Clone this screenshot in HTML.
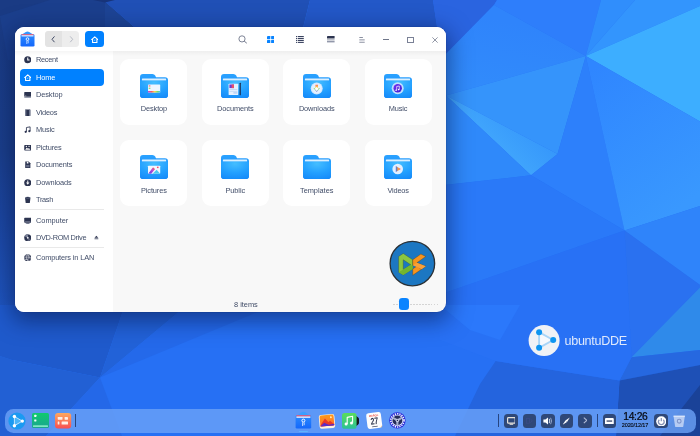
<!DOCTYPE html>
<html lang="en">
<head>
<meta charset="utf-8">
<title>ubuntuDDE Desktop - File Manager</title>
<style>
html,body{margin:0;padding:0;}
body{width:700px;height:436px;overflow:hidden;position:relative;background:#2670f4;font-family:"Liberation Sans",sans-serif;}
#bg{position:absolute;left:0;top:0;width:700px;height:436px;display:block;}
/* ---------- window ---------- */
#win{position:absolute;left:15px;top:27px;width:431.3px;height:285px;border-radius:9px;background:#f8f8f8;
 box-shadow:0 6px 22px 3px rgba(3,15,60,0.50),0 0 0 0.5px rgba(10,30,90,0.18);overflow:hidden;will-change:transform;}
#tbar{position:absolute;left:0;top:0;width:100%;height:24px;background:#fff;}
#side{position:absolute;left:0;top:24px;width:97.5px;height:261px;background:#fff;}
.abs{position:absolute;display:block;}
.navgrp{position:absolute;left:30px;top:3.6px;width:34px;height:16.5px;border-radius:3.5px;background:#ededed;overflow:hidden;}
.navgrp .bk{position:absolute;left:0;top:0;width:17px;height:16.5px;background:#e3e3e3;}
.homebtn{position:absolute;left:70px;top:3.6px;width:19.2px;height:16.5px;border-radius:3.5px;background:#0081ff;}
.row{position:absolute;left:4.9px;width:84px;height:16.5px;border-radius:4px;color:#414d68;font-size:7.4px;line-height:16.5px;white-space:nowrap;}
.row span{position:absolute;left:16.1px;top:0.7px;}
.row svg{position:absolute;left:4.0px;top:4.7px;width:7.5px;height:7.5px;}
.row.sel{background:#0081ff;color:#fff;}
.sep{position:absolute;left:4.6px;width:84.4px;height:0.8px;background:#e9e9e9;}
.card{position:absolute;width:67px;height:66px;border-radius:9px;background:#fff;}
.card .lbl{position:absolute;left:0;width:67px;top:45.9px;text-align:center;font-size:7.4px;line-height:10px;color:#414d68;}
.card svg{position:absolute;left:19.5px;top:15px;width:28px;height:24.2px;}
#status{position:absolute;left:205.9px;top:273.2px;width:50px;text-align:center;font-size:7.4px;line-height:10px;color:#414d68;}
/* ---------- dock ---------- */
#dock{position:absolute;left:4.8px;top:409px;width:690.8px;height:23.5px;border-radius:8.5px;background:rgba(108,163,248,0.80);}
.tray{position:absolute;top:414px;width:13.6px;height:13.6px;border-radius:3.5px;background:#2f4878;}
.dsep{position:absolute;top:414.3px;width:1px;height:13.2px;background:#27457f;}
#clock{position:absolute;left:615.4px;top:412.2px;width:40px;text-align:center;color:#05080f;font-size:10.3px;line-height:10px;letter-spacing:-0.34px;-webkit-text-stroke:0.22px #05080f;}
#date{position:absolute;left:615px;top:421.9px;width:40px;text-align:center;color:#05080f;font-size:5.5px;line-height:6px;letter-spacing:-0.1px;-webkit-text-stroke:0.12px #05080f;}
#brand{position:absolute;left:564.5px;top:332.6px;font-size:12.6px;line-height:16px;color:#dfe9fc;white-space:nowrap;letter-spacing:-0.3px;}
</style>
</head>
<body>
<div id="root" style="position:absolute;left:0;top:0;width:700px;height:436px;will-change:transform">
<!-- ================= WALLPAPER ================= -->
<svg id="bg" viewBox="0 0 700 436" preserveAspectRatio="none">
<rect width="700" height="436" fill="#2670f4"/>
<g id="polys">
<defs>
<linearGradient id="gAD" gradientUnits="userSpaceOnUse" x1="590" y1="70" x2="690" y2="200"><stop offset="0" stop-color="#2f86ff"/><stop offset="1" stop-color="#3998fe"/></linearGradient>
<linearGradient id="gB" gradientUnits="userSpaceOnUse" x1="490" y1="140" x2="520" y2="110"><stop offset="0" stop-color="#40a5fc"/><stop offset="1" stop-color="#3596fb"/></linearGradient>
<linearGradient id="gT" gradientUnits="userSpaceOnUse" x1="500" y1="20" x2="485" y2="90"><stop offset="0" stop-color="#2f84fb"/><stop offset="1" stop-color="#318bfb"/></linearGradient>
<linearGradient id="gL" gradientUnits="userSpaceOnUse" x1="0" y1="0" x2="0" y2="360"><stop offset="0" stop-color="#1a3b84"/><stop offset=".42" stop-color="#1b3f8c"/><stop offset=".6" stop-color="#1c46a0"/><stop offset=".75" stop-color="#1e4fb2"/><stop offset=".9" stop-color="#1f58c6"/><stop offset="1" stop-color="#1f5acc"/></linearGradient>
</defs>
<polygon points="0.0,0.0 103.0,0.0 142.0,34.0 142.0,300.0 0.0,300.0" fill="#1b3f8d" />
<polygon points="105.0,1.6 142.0,34.0 105.0,34.0" fill="#1d4495" />
<polygon points="0.0,0.0 50.0,0.0 0.0,16.0" fill="#1a3b84" />
<polygon points="0.0,16.0 0.0,356.0 12.5,360.0 30.0,345.0 30.0,60.0 8.0,60.0" fill="url(#gL)" />
<polygon points="103.0,0.0 310.0,0.0 300.0,40.0 149.0,40.0" fill="#2050b6" />
<polygon points="93.0,0.0 115.0,0.0 105.0,2.4" fill="#17347a" />
<polygon points="310.0,0.0 433.0,0.0 439.0,40.0 300.0,40.0" fill="#2358c8" />
<polygon points="433.0,0.0 497.0,0.0 494.0,5.0 440.0,60.0 439.0,40.0" fill="#2a64e0" />
<polygon points="497.0,0.0 601.0,0.0 585.8,56.0 494.0,5.0" fill="#2e7efb" />
<polygon points="601.0,0.0 635.0,0.0 585.8,56.0" fill="#308efc" />
<polygon points="635.0,0.0 700.0,0.0 700.0,6.0 585.8,56.0" fill="#3395fd" />
<polygon points="700.0,6.0 700.0,121.5 585.8,56.0" fill="#3daeff" />
<polygon points="494.0,5.0 585.8,56.0 446.0,95.5 440.0,97.0 440.0,60.0" fill="url(#gT)" />
<polygon points="446.0,95.5 585.8,56.0 557.5,154.0" fill="#3594fb" />
<polygon points="446.0,95.5 557.5,154.0 531.0,175.3" fill="url(#gB)" />
<polygon points="446.0,95.5 531.0,175.3 440.0,185.5 440.0,97.0" fill="#2f89fa" />
<polygon points="585.8,56.0 624.5,230.5 531.0,175.3 557.5,154.0" fill="#2d80fb" />
<polygon points="585.8,56.0 700.0,121.5 700.0,206.0 624.5,230.5" fill="url(#gAD)" />
<polygon points="624.5,230.5 700.0,206.0 700.0,285.0" fill="#2f84fa" />
<polygon points="440.0,185.5 531.0,175.3 624.5,230.5 440.0,294.5" fill="#2a79f8" />
<polygon points="624.5,230.5 700.0,285.0 700.0,287.5 631.6,357.3" fill="#2a71f0" />
<polygon points="631.6,357.3 700.0,287.5 700.0,350.0" fill="#2f8aea" />
<polygon points="631.6,357.3 700.0,350.0 700.0,365.0 619.5,380.4" fill="#2668e0" />
<polygon points="619.5,380.4 700.0,365.0 700.0,436.0 616.0,436.0" fill="#1e50b6" />
<polygon points="660.0,436.0 700.0,385.0 700.0,436.0" fill="#1a4298" />
<polygon points="495.7,361.0 619.5,380.4 616.0,436.0 455.0,436.0 480.0,384.0" fill="#2464de" />
<polygon points="440.0,294.5 624.5,230.5 631.6,357.3 619.5,380.4 495.7,361.0 440.0,340.0" fill="#2871f5" />
<polygon points="100.0,377.5 125.0,305.0 0.0,305.0 0.0,356.0 12.5,360.0" fill="#1f5acc" />
<polygon points="100.0,377.5 125.0,305.0 187.0,305.0" fill="#2262d8" />
<polygon points="100.0,377.5 187.0,305.0 275.0,305.0" fill="#2469ea" />
<polygon points="100.0,377.5 12.5,360.0 0.0,356.0 0.0,436.0 46.0,436.0" fill="#2260d4" />
<polygon points="100.0,377.5 46.0,436.0 122.0,436.0" fill="#2468e8" />
<polygon points="440.0,305.0 520.0,305.0 500.0,340.0 470.0,330.0" fill="#2b78fb" />
</g>
</svg>

<!-- ================= BRAND ================= -->
<svg class="abs" style="left:528px;top:324.5px;width:32px;height:32px" viewBox="0 0 32 32">
 <circle cx="16.1" cy="15.6" r="15.5" fill="#f0f2f6"/>
 <path d="M11.1 7.2 L25.2 15 L11.1 22.8 Z" fill="#f6f9fd" stroke="#a9d5f7" stroke-width="1.9" stroke-linejoin="round"/>
 <circle cx="11.1" cy="7.2" r="3" fill="#0f95f0"/>
 <circle cx="25.2" cy="15" r="3" fill="#0f95f0"/>
 <circle cx="11.1" cy="22.8" r="3" fill="#0f95f0"/>
</svg>
<div id="brand">ubuntuDDE</div>

<!-- ================= FILE MANAGER WINDOW ================= -->
<div id="win">
 <div id="tbar">
  <svg class="abs" style="left:5.4px;top:3.6px;width:15px;height:16px" viewBox="0 0 30 32">
   <defs><linearGradient id="fmg" x1="0" y1="0" x2="0" y2="1"><stop offset="0" stop-color="#2a8bff"/><stop offset="1" stop-color="#1467fb"/></linearGradient></defs>
   <path d="M1.4 8.4 L11.6 2.2 Q15 0.2 18.4 2.2 L28.6 8.4 Z" fill="#3398ff"/>
   <rect x="1" y="6.4" width="28" height="24.6" rx="2.6" fill="url(#fmg)"/>
   <rect x="3" y="6.4" width="24" height="2.2" fill="#ff5a6a"/>
   <rect x="3" y="8.6" width="24" height="2.2" fill="#f4f7ff"/>
   <circle cx="15" cy="16.2" r="2.7" fill="none" stroke="#fff" stroke-width="1.7"/>
   <path d="M13.6 19.4 V26 M16.4 19.4 V24.6" stroke="#fff" stroke-width="1.3" fill="none"/>
  </svg>
  <div class="navgrp"><div class="bk"></div>
   <svg class="abs" style="left:0;top:0;width:34px;height:16px" viewBox="0 0 34 16">
    <path d="M9.5 5.4 L7 8.3 L9.5 11.2" fill="none" stroke="#3a4360" stroke-width="0.95"/>
    <path d="M25.2 5.4 L27.7 8.3 L25.2 11.2" fill="none" stroke="#b3b7c2" stroke-width="0.95"/>
   </svg>
  </div>
  <div class="homebtn"><svg class="abs" style="left:5.85px;top:5.0px;width:7.5px;height:7.5px" viewBox="0 0 16 16"><path d="M8 1.8 L14.6 7.6 H12.6 V14.2 H3.4 V7.6 H1.4 Z" fill="none" stroke="#fff" stroke-width="2.3" stroke-linejoin="round"/><path d="M6.2 8.2 H9.8 L8 10.6 Z" fill="#fff" opacity=".75"/></svg></div>
  <!-- search -->
  <svg class="abs" style="left:222.6px;top:8px;width:9.4px;height:8.6px" viewBox="0 0 9.4 8.6"><circle cx="4" cy="3.9" r="3.1" fill="none" stroke="#6f768a" stroke-width="0.9"/><path d="M6.2 6.1 L8.8 8.2" stroke="#6f768a" stroke-width="1" fill="none"/></svg>
  <!-- grid -->
  <svg class="abs" style="left:252px;top:8.8px;width:7.4px;height:7.2px" viewBox="0 0 7.4 7.2"><g fill="#0a84ff"><rect x="0" y="0" width="3.3" height="3.2" rx=".5"/><rect x="4.1" y="0" width="3.3" height="3.2" rx=".5"/><rect x="0" y="4" width="3.3" height="3.2" rx=".5"/><rect x="4.1" y="4" width="3.3" height="3.2" rx=".5"/></g></svg>
  <!-- list -->
  <svg class="abs" style="left:281px;top:9px;width:7.8px;height:7px" viewBox="0 0 7.8 7"><g fill="#3a4360"><rect x="0" y="0" width="1.1" height="1.1"/><rect x="1.8" y="0" width="6" height="1.1"/><rect x="0" y="1.95" width="1.1" height="1.1"/><rect x="1.8" y="1.95" width="6" height="1.1"/><rect x="0" y="3.9" width="1.1" height="1.1"/><rect x="1.8" y="3.9" width="6" height="1.1"/><rect x="0" y="5.85" width="1.1" height="1.1"/><rect x="1.8" y="5.85" width="6" height="1.1"/></g></svg>
  <!-- detail -->
  <svg class="abs" style="left:312.4px;top:8.5px;width:7.6px;height:7.6px" viewBox="0 0 7.6 7.6"><rect x="0" y="0" width="7.6" height="2.6" rx=".4" fill="#2c3450"/><g fill="#9298aa"><rect x="0" y="3.4" width="7.6" height="1"/><rect x="0" y="5.0" width="7.6" height="1"/><rect x="0" y="6.6" width="7.6" height="1"/></g></svg>
  <!-- menu -->
  <svg class="abs" style="left:343.6px;top:9.9px;width:6px;height:6px" viewBox="0 0 6 6"><g fill="#6f768a"><rect x="0.3" y="0.2" width="3.6" height=".8"/><rect x="0.3" y="2.5" width="5.4" height=".8"/><rect x="0.3" y="4.8" width="5.4" height=".8"/></g></svg>
  <!-- minimize -->
  <div class="abs" style="left:368.2px;top:12px;width:6.2px;height:0.9px;background:#6f768a"></div>
  <!-- maximize -->
  <div class="abs" style="left:392.4px;top:10.2px;width:5.1px;height:3.6px;border:0.8px solid #7a8196"></div>
  <!-- close -->
  <svg class="abs" style="left:416.7px;top:9.6px;width:6px;height:6px" viewBox="0 0 6.4 6.4"><path d="M0.4 0.4 L6 6 M6 0.4 L0.4 6" stroke="#6f768a" stroke-width=".8" fill="none"/></svg>
 </div>
 <div id="side">
<div class="row" style="top:0.80px"><svg viewBox="0 0 16 16"><circle cx="8" cy="8" r="7.6" fill="#2c3450"/><path d="M8 3.4V8.6H11.8" fill="none" stroke="#fff" stroke-width="2.2"/></svg><span style="letter-spacing:-0.284px">Recent</span></div>
<div class="row sel" style="top:18.30px"><svg viewBox="0 0 16 16"><path d="M8 1.8 L14.6 7.6 H12.6 V14.2 H3.4 V7.6 H1.4 Z" fill="none" stroke="#fff" stroke-width="2.3" stroke-linejoin="round"/><path d="M6.2 8.2 H9.8 L8 10.6 Z" fill="#fff" opacity=".75"/></svg><span style="letter-spacing:-0.106px">Home</span></div>
<div class="row" style="top:35.80px"><svg viewBox="0 0 16 16"><rect x="0.5" y="2" width="15" height="10" rx="1" fill="#2c3450"/><rect x="0.5" y="12.6" width="15" height="1.8" rx="0.6" fill="#7a8198"/><rect x="2" y="10" width="3" height="1.2" fill="#fff" opacity=".8"/></svg><span style="letter-spacing:-0.088px">Desktop</span></div>
<div class="row" style="top:53.30px"><svg viewBox="0 0 16 16"><rect x="2.5" y="1" width="11" height="14" rx="1.2" fill="#2c3450"/><rect x="2.5" y="1" width="2.4" height="14" fill="#7f869c"/><rect x="11.1" y="1" width="2.4" height="14" fill="#7f869c"/></svg><span style="letter-spacing:-0.214px">Videos</span></div>
<div class="row" style="top:70.80px"><svg viewBox="0 0 16 16"><path d="M5.2 12.2V3.2L13 1.8V10.8" fill="none" stroke="#2c3450" stroke-width="1.8" stroke-linejoin="round"/><circle cx="3.6" cy="12.4" r="2.4" fill="#2c3450"/><circle cx="11.4" cy="11" r="2.4" fill="#2c3450"/></svg><span style="letter-spacing:-0.141px">Music</span></div>
<div class="row" style="top:88.30px"><svg viewBox="0 0 16 16"><rect x="0.5" y="2" width="15" height="12" rx="1.6" fill="#2c3450"/><path d="M2.5 12 L6 7.4 L8.6 10.2 L10.6 8.4 L13.5 12 Z" fill="#fff"/><circle cx="5" cy="5.2" r="1.3" fill="#fff"/><rect x="9" y="4" width="3.6" height="1.6" fill="#fff"/></svg><span style="letter-spacing:-0.129px">Pictures</span></div>
<div class="row" style="top:105.80px"><svg viewBox="0 0 16 16"><path d="M2.6 1 H10 L13.6 4.6 V15 H2.6 Z" fill="#2c3450"/><path d="M6 1.8 H9.4 V5.4 H6 Z" fill="#fff"/><rect x="4.6" y="8.4" width="7" height="5" fill="#666e88"/></svg><span style="letter-spacing:-0.111px">Documents</span></div>
<div class="row" style="top:123.30px"><svg viewBox="0 0 16 16"><circle cx="8" cy="8" r="7.6" fill="#2c3450"/><path d="M8 3.2 V8.4" stroke="#fff" stroke-width="2" fill="none"/><path d="M4.4 7.6 L8 12.2 L11.6 7.6 Z" fill="#fff"/></svg><span style="letter-spacing:-0.109px">Downloads</span></div>
<div class="row" style="top:140.80px"><svg viewBox="0 0 16 16"><path d="M2.2 3.6 H13.8 L12.4 15 H3.6 Z" fill="#2c3450"/><ellipse cx="8" cy="3.4" rx="5.9" ry="1.9" fill="#6a728c"/><ellipse cx="8" cy="3.2" rx="4.4" ry="1" fill="#2c3450"/></svg><span style="letter-spacing:-0.331px">Trash</span></div>
<div class="row" style="top:161.00px"><svg viewBox="0 0 16 16"><rect x="0.5" y="1.6" width="15" height="10.4" rx="1.4" fill="#2c3450"/><rect x="2.4" y="9.4" width="11.2" height="1.2" fill="#8a90a6"/><rect x="5" y="12.6" width="6" height="1.8" fill="#2c3450"/><rect x="3.4" y="13.6" width="9.2" height="1.2" fill="#8a90a6"/></svg><span style="letter-spacing:-0.022px">Computer</span></div>
<div class="row" style="top:178.20px"><svg viewBox="0 0 16 16"><circle cx="8" cy="8" r="7.6" fill="#2c3450"/><path d="M8 8 L1.2 5 A7.4 7.4 0 0 1 8.6 0.6 Z" fill="#7d849a"/><path d="M8 8 L14.8 11 A7.4 7.4 0 0 1 7.4 15.4 Z" fill="#596078"/><circle cx="8" cy="8" r="2" fill="#e8eaf0"/></svg><span style="letter-spacing:-0.342px">DVD-ROM Drive</span><svg style="left:74.5px;top:6.0px;width:4.8px;height:4.8px" viewBox="0 0 12 12"><path d="M6 1.6 L10.8 7 H1.2 Z" fill="#2c3450"/><rect x="1.2" y="8.6" width="9.6" height="1.9" fill="#2c3450"/></svg></div>
<div class="row" style="top:198.30px"><svg viewBox="0 0 16 16"><circle cx="8" cy="8" r="7.6" fill="#2c3450"/><path d="M8 .8 C4.4 4 4.4 12 8 15.2 M8 .8 C11.6 4 11.6 12 8 15.2 M.8 8 H15.2 M2 4.2 H14 M2 11.8 H14" fill="none" stroke="#fff" stroke-width="1.1" opacity=".9"/><rect x="8.6" y="8.8" width="6" height="4.6" rx=".6" fill="#2c3450" stroke="#fff" stroke-width=".7"/></svg><span style="letter-spacing:-0.140px">Computers in LAN</span></div>
<div class="sep" style="top:158.2px"></div>
<div class="sep" style="top:196.0px"></div>
 </div>
<svg width="0" height="0" style="position:absolute"><defs>
 <linearGradient id="fb" x1="0" y1="0" x2="0" y2="1"><stop offset="0" stop-color="#2aa2ff"/><stop offset="1" stop-color="#1a86fb"/></linearGradient>
 <radialGradient id="ff" cx="0.5" cy="0.12" r="0.95"><stop offset="0" stop-color="#45beff"/><stop offset="0.55" stop-color="#23a0ff"/><stop offset="1" stop-color="#158af9"/></radialGradient>
 <linearGradient id="rb" x1="0" y1="0" x2="1" y2="0"><stop offset="0" stop-color="#b34be8"/><stop offset=".3" stop-color="#ff5a5a"/><stop offset=".55" stop-color="#ffd84a"/><stop offset=".8" stop-color="#6ade6a"/><stop offset="1" stop-color="#49c0ff"/></linearGradient>
 <linearGradient id="rbv" x1="0" y1="0" x2="0" y2="1"><stop offset="0" stop-color="#ff6a5a"/><stop offset=".35" stop-color="#ffd24a"/><stop offset=".6" stop-color="#7ade7a"/><stop offset="1" stop-color="#8a6af0"/></linearGradient>
 <linearGradient id="pur" x1="0" y1="0" x2="1" y2="1"><stop offset="0" stop-color="#7a30f0"/><stop offset="1" stop-color="#3a1ed0"/></linearGradient>
 <linearGradient id="mnt" x1="0" y1="1" x2="1" y2="0"><stop offset="0" stop-color="#5a3ae8"/><stop offset=".6" stop-color="#c04ad0"/><stop offset="1" stop-color="#ff6a3a"/></linearGradient>
 <linearGradient id="ply" x1="0" y1="0" x2="1" y2="0"><stop offset="0" stop-color="#3a6af0"/><stop offset=".5" stop-color="#ffa63a"/><stop offset="1" stop-color="#ff3a6a"/></linearGradient>
</defs></svg>
<div class="card" style="left:105.4px;top:31.5px"><svg viewBox="0 0 28 24"><path d="M0 3 Q0 0 3 0 H12.4 Q14.4 0 15.2 1.5 L16 3.2 H25 Q28 3.2 28 6.2 V21 Q28 24 25 24 H3 Q0 24 0 21 Z" fill="url(#fb)"/><rect x="1.9" y="4.5" width="24.2" height="2.2" rx=".4" fill="#e9f6ff" opacity=".92"/><path d="M0 6.5 H28 V21 Q28 24 25 24 H3 Q0 24 0 21 Z" fill="url(#ff)"/><rect x="8" y="10.4" width="12.2" height="8" rx=".6" fill="#eef6ff"/><rect x="8" y="16.9" width="12.2" height="1.5" fill="url(#rb)"/><rect x="8.7" y="11.3" width="1.7" height="1.1" fill="#ff5a6a"/><rect x="8.7" y="13.6" width="1.7" height="1.1" fill="#7ad85a"/></svg><div class="lbl" style="letter-spacing:-0.088px">Desktop</div></div>
<div class="card" style="left:186.8px;top:31.5px"><svg viewBox="0 0 28 24"><path d="M0 3 Q0 0 3 0 H12.4 Q14.4 0 15.2 1.5 L16 3.2 H25 Q28 3.2 28 6.2 V21 Q28 24 25 24 H3 Q0 24 0 21 Z" fill="url(#fb)"/><rect x="1.9" y="4.5" width="24.2" height="2.2" rx=".4" fill="#e9f6ff" opacity=".92"/><path d="M0 6.5 H28 V21 Q28 24 25 24 H3 Q0 24 0 21 Z" fill="url(#ff)"/><rect x="7.6" y="9.6" width="9.6" height="11.2" rx=".5" fill="#e6f1ff"/><rect x="8.4" y="10.4" width="4.6" height="3.6" fill="#6a3ad8"/><rect x="10.6" y="10.4" width="2.4" height="3.6" fill="#e8506a"/><rect x="8.4" y="15.2" width="8" height=".7" fill="#b8d2f4"/><rect x="8.4" y="16.8" width="8" height=".7" fill="#b8d2f4"/><rect x="12.4" y="18.4" width="4" height=".9" fill="#9abcf0"/><rect x="18.6" y="8.6" width="1.2" height="12.6" rx=".5" fill="#1d2a4a"/></svg><div class="lbl" style="letter-spacing:-0.111px">Documents</div></div>
<div class="card" style="left:268.2px;top:31.5px"><svg viewBox="0 0 28 24"><path d="M0 3 Q0 0 3 0 H12.4 Q14.4 0 15.2 1.5 L16 3.2 H25 Q28 3.2 28 6.2 V21 Q28 24 25 24 H3 Q0 24 0 21 Z" fill="url(#fb)"/><rect x="1.9" y="4.5" width="24.2" height="2.2" rx=".4" fill="#e9f6ff" opacity=".92"/><path d="M0 6.5 H28 V21 Q28 24 25 24 H3 Q0 24 0 21 Z" fill="url(#ff)"/><circle cx="13.7" cy="14.3" r="6" fill="#cfe6ff"/><circle cx="13.7" cy="14.3" r="5" fill="#e4f1ff"/><path d="M12.4 10.6 H15 V13.8 H17 L13.7 18 L10.4 13.8 H12.4 Z" fill="url(#rbv)"/><path d="M11.6 14.6 L13.7 13 L15.8 14.6 L13.7 17 Z" fill="#fff"/></svg><div class="lbl" style="letter-spacing:-0.109px">Downloads</div></div>
<div class="card" style="left:349.6px;top:31.5px"><svg viewBox="0 0 28 24"><path d="M0 3 Q0 0 3 0 H12.4 Q14.4 0 15.2 1.5 L16 3.2 H25 Q28 3.2 28 6.2 V21 Q28 24 25 24 H3 Q0 24 0 21 Z" fill="url(#fb)"/><rect x="1.9" y="4.5" width="24.2" height="2.2" rx=".4" fill="#e9f6ff" opacity=".92"/><path d="M0 6.5 H28 V21 Q28 24 25 24 H3 Q0 24 0 21 Z" fill="url(#ff)"/><circle cx="13.7" cy="14.1" r="6" fill="#bfe0ff"/><circle cx="13.7" cy="14.1" r="4.2" fill="url(#pur)"/><path d="M12.7 16 V12.4 L15.3 11.9 V15.4" stroke="#fff" stroke-width=".7" fill="none"/><circle cx="12.1" cy="16.1" r=".8" fill="#fff"/><circle cx="14.7" cy="15.5" r=".8" fill="#fff"/></svg><div class="lbl" style="letter-spacing:-0.141px">Music</div></div>
<div class="card" style="left:105.4px;top:113.2px"><svg viewBox="0 0 28 24"><path d="M0 3 Q0 0 3 0 H12.4 Q14.4 0 15.2 1.5 L16 3.2 H25 Q28 3.2 28 6.2 V21 Q28 24 25 24 H3 Q0 24 0 21 Z" fill="url(#fb)"/><rect x="1.9" y="4.5" width="24.2" height="2.2" rx=".4" fill="#e9f6ff" opacity=".92"/><path d="M0 6.5 H28 V21 Q28 24 25 24 H3 Q0 24 0 21 Z" fill="url(#ff)"/><rect x="8" y="10.6" width="12.2" height="8" rx=".6" fill="#f2f7ff"/><path d="M8.4 18.4 L12.6 12.6 Q13.4 12 14 12.8 L15 14.2 L11.2 18.6 Z" fill="url(#mnt)"/><path d="M12.6 18.6 L16.6 14.6 L20.2 18.6 Z" fill="#4ac8f0"/><circle cx="17.8" cy="12.2" r=".9" fill="#ff4a6a"/></svg><div class="lbl" style="letter-spacing:-0.129px">Pictures</div></div>
<div class="card" style="left:186.8px;top:113.2px"><svg viewBox="0 0 28 24"><path d="M0 3 Q0 0 3 0 H12.4 Q14.4 0 15.2 1.5 L16 3.2 H25 Q28 3.2 28 6.2 V21 Q28 24 25 24 H3 Q0 24 0 21 Z" fill="url(#fb)"/><rect x="1.9" y="4.5" width="24.2" height="2.2" rx=".4" fill="#e9f6ff" opacity=".92"/><path d="M0 6.5 H28 V21 Q28 24 25 24 H3 Q0 24 0 21 Z" fill="url(#ff)"/></svg><div class="lbl" style="letter-spacing:-0.088px">Public</div></div>
<div class="card" style="left:268.2px;top:113.2px"><svg viewBox="0 0 28 24"><path d="M0 3 Q0 0 3 0 H12.4 Q14.4 0 15.2 1.5 L16 3.2 H25 Q28 3.2 28 6.2 V21 Q28 24 25 24 H3 Q0 24 0 21 Z" fill="url(#fb)"/><rect x="1.9" y="4.5" width="24.2" height="2.2" rx=".4" fill="#e9f6ff" opacity=".92"/><path d="M0 6.5 H28 V21 Q28 24 25 24 H3 Q0 24 0 21 Z" fill="url(#ff)"/></svg><div class="lbl" style="letter-spacing:-0.036px">Templates</div></div>
<div class="card" style="left:349.6px;top:113.2px"><svg viewBox="0 0 28 24"><path d="M0 3 Q0 0 3 0 H12.4 Q14.4 0 15.2 1.5 L16 3.2 H25 Q28 3.2 28 6.2 V21 Q28 24 25 24 H3 Q0 24 0 21 Z" fill="url(#fb)"/><rect x="1.9" y="4.5" width="24.2" height="2.2" rx=".4" fill="#e9f6ff" opacity=".92"/><path d="M0 6.5 H28 V21 Q28 24 25 24 H3 Q0 24 0 21 Z" fill="url(#ff)"/><circle cx="13.7" cy="13.9" r="5.3" fill="#e2efff"/><path d="M11.8 11 L16.8 13.9 L11.8 16.8 Z" fill="url(#ply)"/></svg><div class="lbl" style="letter-spacing:-0.214px">Videos</div></div>
 <svg class="abs" style="left:370px;top:210px;width:55px;height:53.05px" viewBox="0 0 452 436">
  <circle cx="225" cy="218.5" r="183" fill="#1c77c2" stroke="#2b3136" stroke-width="11"/>
  <path d="M112 160 L150 135 L228 187 L228 262 L150 312 L112 290 Z M150 187 L150 268 L212 228 Z" fill="#8cc63f" fill-rule="evenodd" stroke="#3a4a2a" stroke-width="3" stroke-linejoin="round"/>
  <path d="M112 290 L150 268 L212 228 L228 240 L228 262 L150 312 Z" fill="#74b52e"/>
  <path d="M228 187 L295 140 L335 160 L262 212 L335 240 L300 265 L262 240 L228 262 L228 315 L300 265 L262 240 L228 232 Z" fill="#f7941e" stroke="#5a3a12" stroke-width="3" stroke-linejoin="round"/>
  <path d="M228 232 L262 212 L335 240 L300 265 Z" fill="#f9a13a"/>
 </svg>
 <div class="abs" style="left:378px;top:277px;width:44.6px;height:1.3px;background:repeating-linear-gradient(90deg,#d4d4d4 0,#d4d4d4 1.7px,transparent 1.7px,transparent 2.9px)"></div>
 <div class="abs" style="left:384.3px;top:271.3px;width:9.6px;height:12px;border-radius:3.2px;background:#0a84ff"></div>
 <div class="abs" style="left:0;top:24px;width:100%;height:4.5px;background:linear-gradient(rgba(0,0,0,0.04),rgba(0,0,0,0))"></div>
 <div id="status" style="letter-spacing:-0.013px">8 items</div>
</div>

<!-- ================= DOCK ================= -->
<div id="dock"></div>
<!-- launcher -->
<svg class="abs" style="left:7.6px;top:411.6px;width:18px;height:18px" viewBox="0 0 18 18">
 <circle cx="9" cy="9" r="8.6" fill="#1a9af2"/>
 <path d="M6.4 4.5 L14.3 9.1 L6.4 13.7 Z" fill="#49b4f8" stroke="#bfe4fd" stroke-width="1" stroke-linejoin="round"/>
 <circle cx="6.4" cy="4.5" r="1.7" fill="#fff"/><circle cx="14.3" cy="9.1" r="1.7" fill="#fff"/><circle cx="6.4" cy="13.7" r="1.7" fill="#fff"/>
</svg>
<!-- multitask / green -->
<svg class="abs" style="left:31.6px;top:413.3px;width:17px;height:15px" viewBox="0 0 17 15">
 <defs><linearGradient id="gg" x1="0" y1="0" x2="0" y2="1"><stop offset="0" stop-color="#0fcb6e"/><stop offset="1" stop-color="#1ba392"/></linearGradient></defs>
 <rect width="17" height="15" rx="1.6" fill="url(#gg)"/>
 <rect x="2.2" y="1.8" width="2.2" height="2.1" rx=".4" fill="#f2fff8"/><rect x="2.2" y="6.4" width="2.2" height="2.1" rx=".4" fill="#f2fff8"/>
 <rect x="1" y="12.2" width="15" height="1.9" rx=".6" fill="#7fe8c0"/>
</svg>
<!-- orange -->
<svg class="abs" style="left:55.4px;top:413px;width:16.2px;height:15.6px" viewBox="0 0 16.2 15.6">
 <defs><linearGradient id="og" x1="0" y1="0" x2="0" y2="1"><stop offset="0" stop-color="#ffa85e"/><stop offset="1" stop-color="#f74e52"/></linearGradient></defs>
 <rect width="16.2" height="15.6" rx="3" fill="url(#og)"/>
 <g fill="#ffeee6"><rect x="2.7" y="4" width="4.8" height="2.7" rx=".4"/><rect x="9.6" y="4" width="3.4" height="2.7" rx=".4"/><rect x="2.7" y="8.6" width="1.7" height="3" rx=".4"/><rect x="6.6" y="8.6" width="6.4" height="3" rx=".4"/></g>
</svg>
<div class="dsep" style="left:74.8px"></div>
<!-- file manager -->
<svg class="abs" style="left:295.3px;top:411.4px;width:16.8px;height:17.8px" viewBox="0 0 30 32">
 <path d="M1.2 10 L11.6 2.4 Q15 0 18.4 2.4 L28.8 10 Z" fill="#3a9eff"/>
 <rect x="1" y="7.6" width="28" height="24" rx="2.4" fill="url(#fmg)"/>
 <rect x="2.4" y="7.6" width="25.2" height="2.3" fill="#ff5468"/>
 <rect x="2.4" y="9.9" width="25.2" height="2.3" fill="#f4f7ff"/>
 <circle cx="15" cy="17.2" r="2.7" fill="none" stroke="#fff" stroke-width="1.7"/>
 <path d="M13.6 20.4 V27 M16.4 20.4 V25.6" stroke="#fff" stroke-width="1.3" fill="none"/>
</svg>
<div class="abs" style="left:299.2px;top:430.9px;width:9px;height:1.1px;border-radius:.5px;background:#5eb4ff"></div>
<!-- photos -->
<svg class="abs" style="left:318.2px;top:412.9px;width:18px;height:16.6px" viewBox="0 0 18 16.6">
 <defs><linearGradient id="pg" x1="0" y1="0" x2="0" y2="1"><stop offset="0" stop-color="#ff9a1a"/><stop offset="1" stop-color="#ff6a2a"/></linearGradient></defs>
 <g transform="rotate(-5 9 8.3)">
  <rect x="1.2" y="1.4" width="15.6" height="14" rx="2.2" fill="#fff1de"/>
  <rect x="2" y="2" width="14" height="11" rx="1.6" fill="url(#pg)"/>
  <path d="M2 12 L7.2 5.4 L10.4 9.4 L12 8 L16 12 V13 H2 Z" fill="#e8382a"/>
  <path d="M2 13 L6 9.6 L10.4 12 L16 11.4 V12.2 Q16 13 15 13 Z" fill="#5a2ac8"/>
  <circle cx="13.2" cy="4.6" r=".9" fill="#fff3c0"/>
 </g>
</svg>
<!-- music -->
<svg class="abs" style="left:341.6px;top:413px;width:17.6px;height:15.8px" viewBox="0 0 17.6 15.8">
 <defs><linearGradient id="mg" x1="0" y1="0" x2="0" y2="1"><stop offset="0" stop-color="#5adc5a"/><stop offset="1" stop-color="#2cc296"/></linearGradient></defs>
 <circle cx="12.2" cy="7.9" r="5.3" fill="#14181c"/>
 <rect x="0" y="0" width="14.6" height="15.8" rx="2.6" fill="url(#mg)"/>
 <path d="M5.2 11 V4.4 L10.6 3.2 V9.8" fill="none" stroke="#fff" stroke-width="1.1" stroke-linejoin="round"/>
 <circle cx="4.1" cy="11.1" r="1.5" fill="#fff"/><circle cx="9.5" cy="9.9" r="1.5" fill="#fff"/>
</svg>
<!-- calendar -->
<svg class="abs" style="left:364.6px;top:411px;width:18.4px;height:19px" viewBox="0 0 18.4 19">
 <g transform="rotate(-7 9.2 9.5)">
  <rect x="1.8" y="1.6" width="14.8" height="15.8" rx="2.4" fill="#fdfdfd"/>
  <path d="M14.2 17.4 L16.6 15 V15.4 Q16.6 17.4 14.6 17.4 Z" fill="#e8c9a0"/>
  <text x="9.2" y="5.5" font-size="2.6" font-weight="bold" fill="#e8483a" text-anchor="middle" font-family="Liberation Sans, sans-serif">MARCH</text>
  <text x="5.5" y="13.4" font-size="9.6" font-weight="bold" fill="#2a3148" font-family="Liberation Sans, sans-serif" textLength="7.8" lengthAdjust="spacingAndGlyphs">27</text>
  <rect x="6.4" y="15.2" width="5.6" height=".7" fill="#4a5168"/>
 </g>
</svg>
<!-- settings -->
<svg class="abs" style="left:388.8px;top:412.4px;width:16.8px;height:16.8px" viewBox="0 0 16.8 16.8">
 <circle cx="8.4" cy="8.4" r="8.2" fill="#2a2ad6"/>
 <circle cx="8.4" cy="8.4" r="6.6" fill="none" stroke="#eef0ff" stroke-width="1.6" stroke-dasharray="1.3 1.05"/>
 <circle cx="8.4" cy="8.4" r="5.7" fill="#dfe3fa"/>
 <circle cx="8.4" cy="8.4" r="4.9" fill="#252c5a"/>
 <path d="M8.4 8.4 V13.4 M8.4 8.4 L4.1 5.9 M8.4 8.4 L12.7 5.9" stroke="#a9b0cf" stroke-width="2.1" fill="none"/>
 <circle cx="8.4" cy="8.4" r="1.7" fill="#c8cde2"/><circle cx="8.4" cy="8.4" r=".7" fill="#252c5a"/>
</svg>
<!-- tray -->
<div class="dsep" style="left:498.3px"></div>
<div class="tray" style="left:504.3px"><svg class="abs" style="left:2.4px;top:2.6px;width:8.8px;height:8.4px" viewBox="0 0 8.8 8.4"><rect x=".6" y=".6" width="7.6" height="5.6" rx=".8" fill="none" stroke="#e6e2da" stroke-width="1.2"/><rect x="2.6" y="6.6" width="3.6" height="1.2" fill="#e6e2da"/></svg></div>
<div class="tray" style="left:522.8px"><svg class="abs" style="left:3.4px;top:4px;width:7px;height:5.6px" viewBox="0 0 7 5.6"><rect x=".4" y=".4" width="3.2" height="4.8" fill="none" stroke="#3b4a86" stroke-width=".8"/><path d="M4.4 1 L6.4 2.8 L4.4 4.6" fill="none" stroke="#3b4a86" stroke-width=".8"/></svg></div>
<div class="tray" style="left:541.3px"><svg class="abs" style="left:2.2px;top:2.8px;width:9.4px;height:8px" viewBox="0 0 9.4 8"><path d="M.4 2.6 H2.4 L5 .4 V7.6 L2.4 5.4 H.4 Z" fill="#fff"/><path d="M6.2 1.8 Q7.4 4 6.2 6.2" fill="none" stroke="#e8ecf6" stroke-width=".9"/><path d="M7.6 .8 Q9.6 4 7.6 7.2" fill="none" stroke="#9fb0d2" stroke-width=".9"/></svg></div>
<div class="tray" style="left:559.8px"><svg class="abs" style="left:2.6px;top:2.6px;width:8.4px;height:8.4px" viewBox="0 0 8.4 8.4"><path d="M7.8 .6 L5 5 L3.4 3.4 Z" fill="#fff"/><path d="M.6 7.8 L3.4 3.4 L5 5 Z" fill="#fff"/></svg></div>
<div class="tray" style="left:578.3px"><svg class="abs" style="left:4.6px;top:3.4px;width:4.6px;height:6.8px" viewBox="0 0 4.6 6.8"><path d="M.8 .6 L3.8 3.4 L.8 6.2" fill="none" stroke="#aeb9d4" stroke-width="1.1"/></svg></div>
<div class="dsep" style="left:597.2px"></div>
<div class="tray" style="left:602.8px"><svg class="abs" style="left:2.4px;top:3.6px;width:8.8px;height:6.4px" viewBox="0 0 8.8 6.4"><rect width="8.8" height="6.4" rx="1" fill="#fff"/><rect x="1.6" y="2.2" width="5.6" height="1.8" fill="#6f7892"/></svg></div>
<div id="clock">14:26</div>
<div id="date">2020/12/17</div>
<div class="tray" style="left:654.3px"><svg class="abs" style="left:1.5px;top:1.5px;width:10.6px;height:10.6px" viewBox="0 0 10.6 10.6"><circle cx="5.3" cy="5.3" r="5.1" fill="#fff"/><path d="M3.3 3.7 A2.9 2.9 0 1 0 7.3 3.7" fill="none" stroke="#8591b4" stroke-width="1.3"/><path d="M5.3 2.1 V5.2" stroke="#8591b4" stroke-width="1.2"/></svg></div>
<!-- trash -->
<svg class="abs" style="left:673.4px;top:414.6px;width:12.4px;height:12.4px" viewBox="0 0 12.4 12.4">
 <path d="M.5 .7 H11.9 L10.3 11.6 Q10.2 12 9.8 12 H2.6 Q2.2 12 2.1 11.6 Z" fill="#d9e3f8" opacity=".72"/>
 <rect x=".5" y=".7" width="11.4" height="1" fill="#f2f6ff" opacity=".8"/>
 <circle cx="6.2" cy="6.2" r="1.9" fill="none" stroke="#7d92c8" stroke-width="1.1"/>
</svg>
</div>
</body>
</html>
